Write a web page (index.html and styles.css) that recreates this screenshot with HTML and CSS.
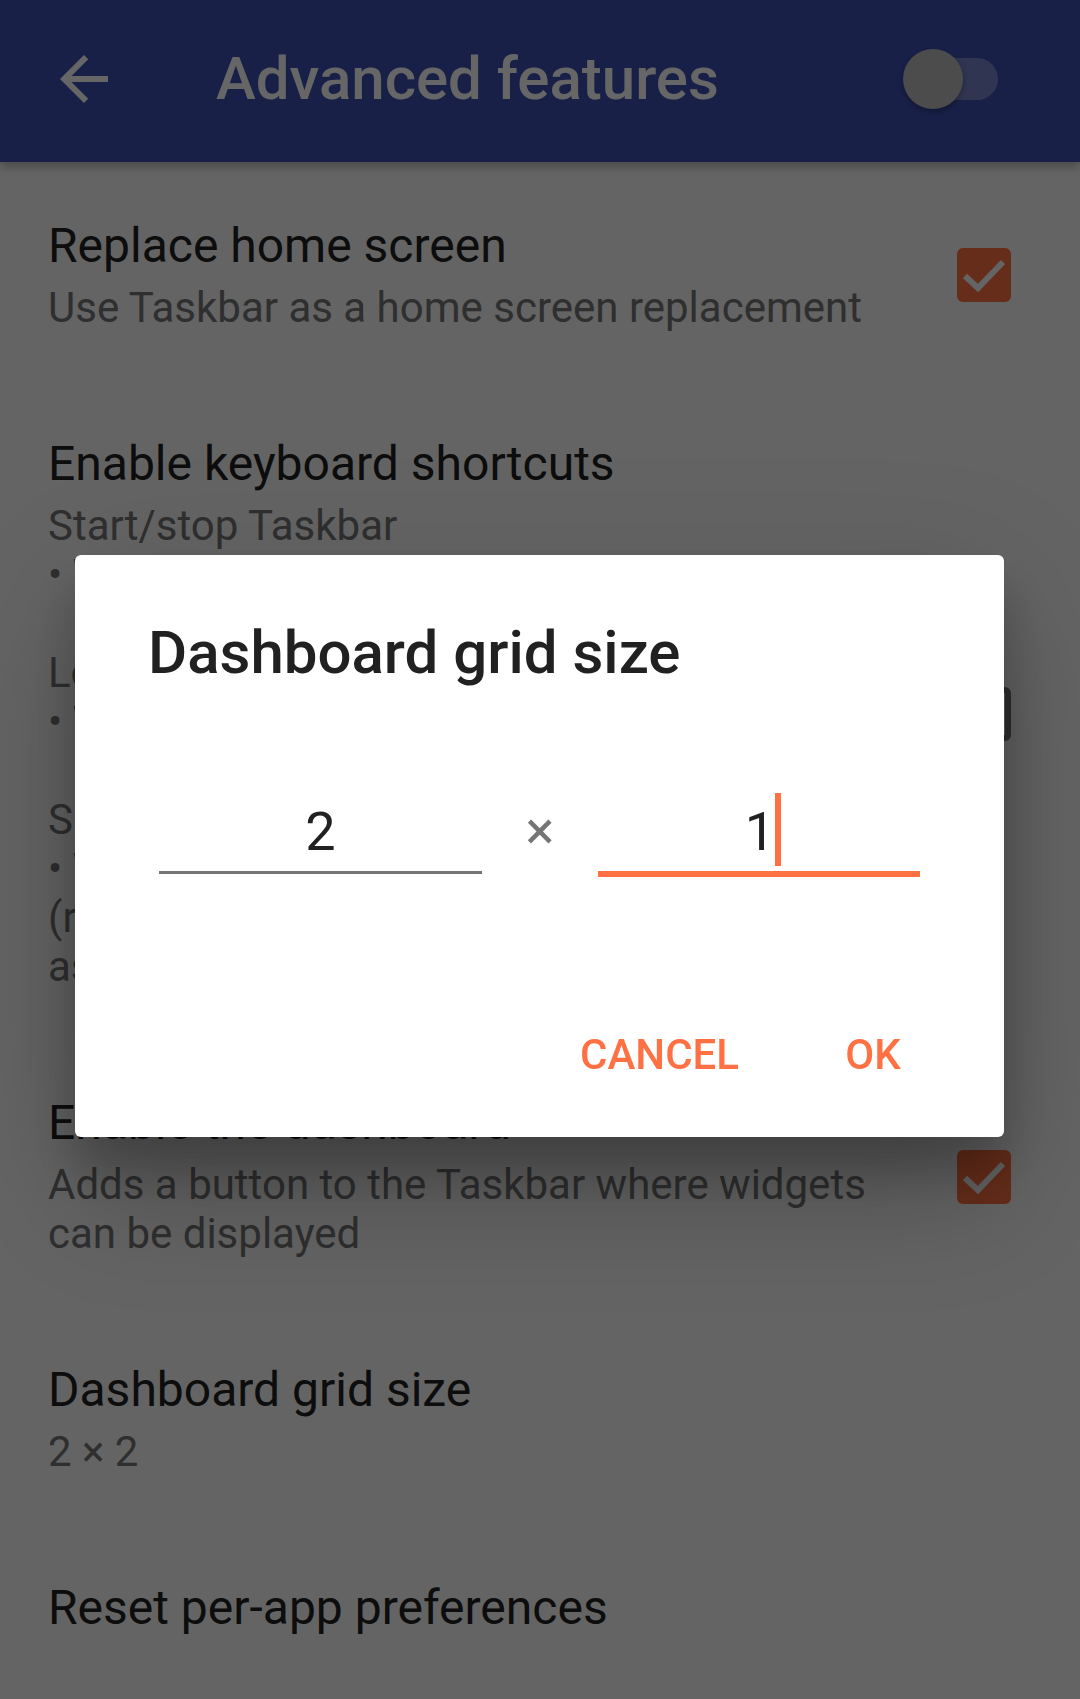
FILE: index.html
```html
<!DOCTYPE html>
<html lang="en">
<head>
<meta charset="utf-8">
<title>Advanced features</title>
<link rel="stylesheet" href="styles.css">
</head>
<body>
<header class="appbar">
  <svg class="back" viewBox="0 0 24 24" aria-hidden="true"><path d="M20 11H7.83l5.59-5.59L12 4l-8 8 8 8 1.41-1.41L7.83 13H20v-2z" fill="#ffffff"/></svg>
  <div class="appbar-title">Advanced features</div>
  <div class="switch"><div class="switch-track"></div><div class="switch-thumb"></div></div>
</header>

<main class="prefs">
  <div class="pref">
    <div class="pref-text">
      <div class="pref-title">Replace home screen</div>
      <div class="pref-summary">Use Taskbar as a home screen replacement</div>
    </div>
    <div class="checkbox on"><svg viewBox="0 0 54 54" aria-hidden="true"><path d="M8 28 L21 40 L46 14" fill="none" stroke="#fafafa" stroke-width="6"/></svg></div>
  </div>

  <div class="pref">
    <div class="pref-text">
      <div class="pref-title">Enable keyboard shortcuts</div>
      <div class="pref-summary">Start/stop Taskbar
• Win + Alt + T

Lock device
• Win + L

Show/hide the dashboard
• Win + D
(requires Taskbar to be set
as the default assistant app)</div>
    </div>
    <div class="checkbox off"></div>
  </div>

  <div class="pref">
    <div class="pref-text">
      <div class="pref-title">Enable the dashboard</div>
      <div class="pref-summary">Adds a button to the Taskbar where widgets can be displayed</div>
    </div>
    <div class="checkbox on"><svg viewBox="0 0 54 54" aria-hidden="true"><path d="M8 28 L21 40 L46 14" fill="none" stroke="#fafafa" stroke-width="6"/></svg></div>
  </div>

  <div class="pref">
    <div class="pref-text">
      <div class="pref-title">Dashboard grid size</div>
      <div class="pref-summary">2 × 2</div>
    </div>
  </div>

  <div class="pref">
    <div class="pref-text">
      <div class="pref-title">Reset per-app preferences</div>
    </div>
  </div>
</main>

<div class="scrim"></div>

<div class="dialog" role="dialog">
  <div class="dialog-title">Dashboard grid size</div>
  <div class="grid-row">
    <div class="field">2</div>
    <div class="times">×</div>
    <div class="field focused">1<span class="cursor"></span></div>
  </div>
  <div class="actions">
    <div class="btn">CANCEL</div>
    <div class="btn">OK</div>
  </div>
</div>
</body>
</html>
```
FILE: styles.css
```css
* { box-sizing: border-box; }
html, body { margin: 0; padding: 0; }
body {
  width: 1080px;
  height: 1699px;
  overflow: hidden;
  position: relative;
  background: #fafafa;
  font-family: Roboto, "Noto Sans", "Liberation Sans", sans-serif;
}

.appbar {
  height: 162px;
  background: #3f51b5;
  color: #ffffff;
  display: flex;
  align-items: center;
  padding: 0 82px 4px 48px;
  position: relative;
  z-index: 1;
  box-shadow: 0 4px 10px rgba(0, 0, 0, 0.3);
}
.back { width: 72px; height: 72px; flex: none; display: block; }
.appbar-title {
  flex: 1;
  margin-left: 96px;
  font-size: 60px;
  font-weight: 500;
  line-height: 70px;
}
.switch { position: relative; width: 95px; height: 60px; flex: none; }
.switch-track {
  position: absolute; left: 7px; top: 9px;
  width: 88px; height: 42px; border-radius: 21px;
  background: rgba(255, 255, 255, 0.3);
}
.switch-thumb {
  position: absolute; left: 0; top: 0;
  width: 60px; height: 60px; border-radius: 50%;
  background: #bdbdbd;
  box-shadow: 0 3px 6px rgba(0, 0, 0, 0.3);
}

.pref {
  display: flex;
  align-items: center;
  padding: 56px 69px 48px 48px;
}
.pref-text { flex: 1; min-width: 0; }
.pref-title { font-size: 48px; line-height: 56px; color: #212121; }
.pref-summary {
  margin-top: 9px;
  font-size: 42px;
  line-height: 49px;
  color: #757575;
  white-space: pre-line;
}
.checkbox {
  flex: none;
  width: 54px; height: 54px;
  margin-left: 50px;
  border-radius: 6px;
}
.checkbox svg { display: block; width: 54px; height: 54px; }
.checkbox.on { background: #ff7043; }
.checkbox.off { border: 6px solid #757575; }

.scrim {
  position: fixed;
  left: 0; top: 0; right: 0; bottom: 0;
  background: rgba(0, 0, 0, 0.6);
  z-index: 2;
}

.dialog {
  position: absolute;
  left: 75px; top: 555px;
  width: 929px;
  background: #ffffff;
  border-radius: 6px;
  z-index: 3;
  padding: 63px 0 29px;
  box-shadow: 0 33px 45px rgba(0, 0, 0, 0.2), 0 72px 114px rgba(0, 0, 0, 0.14), 0 27px 138px rgba(0, 0, 0, 0.12);
}
.dialog-title {
  padding-left: 73px;
  font-size: 60px;
  font-weight: 500;
  line-height: 70px;
  color: #212121;
}
.grid-row {
  display: flex;
  align-items: flex-start;
  margin-top: 111.5px;
  padding: 0 84px;
}
.field {
  width: 323px;
  text-align: center;
  font-size: 54px;
  line-height: 64px;
  color: #212121;
  padding-bottom: 7.5px;
  border-bottom: 3px solid #757575;
}
.field.focused { width: 322px; padding-left: 8px; border-bottom: 6px solid #ff7043; }
.times {
  width: 116px;
  text-align: center;
  font-size: 54px;
  line-height: 62px;
  color: #757575;
}
.cursor {
  display: inline-block;
  width: 6px;
  height: 73px;
  background: #ff7043;
  vertical-align: top;
  margin: -7px 0 -2px 0;
}
.actions {
  display: flex;
  justify-content: flex-end;
  gap: 14px;
  margin-top: 123px;
  padding-right: 35px;
}
.btn {
  height: 108px;
  min-width: 192px;
  padding: 0 24px;
  display: flex;
  align-items: center;
  justify-content: center;
  font-size: 42px;
  font-weight: 500;
  color: #ff7043;
}
```
